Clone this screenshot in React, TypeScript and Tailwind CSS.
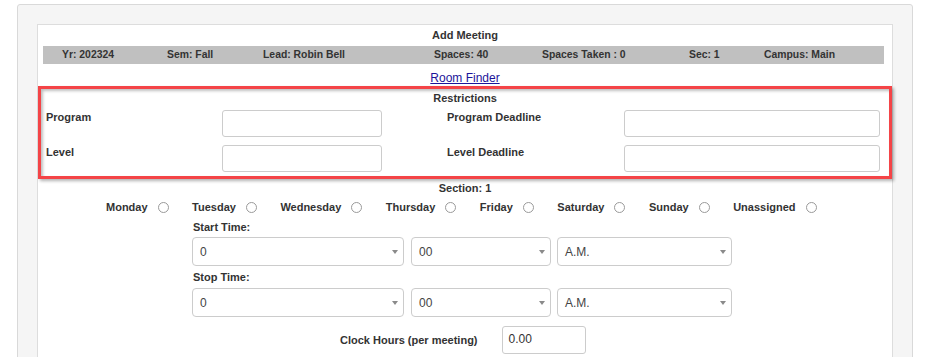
import React from "react";

function Sel({ className, value }: { className: string; value: string }) {
  return (
    <div
      className={
        "relative h-[29px] border border-[#cccccc] rounded-[4px] bg-white flex items-center pl-[7px] text-[12px] text-[#444444] " +
        className
      }
    >
      <span>{value}</span>
      <span className="absolute right-[5px] top-[12px] w-0 h-0 border-l-[3.5px] border-r-[3.5px] border-t-[4px] border-l-transparent border-r-transparent border-t-[#8a8a8a]" />
    </div>
  );
}

function Day({ label }: { label: string }) {
  return (
    <div className="flex items-center">
      <span>{label}</span>
      <span className="ml-[10px] w-[11px] h-[11px] rounded-full border border-[#9a9a9a] bg-white" />
    </div>
  );
}

export default function App() {
  return (
    <div className="w-[928px] h-[357px] overflow-hidden bg-white font-['Liberation_Sans',Arial,sans-serif] text-[#333333]">
      <div className="ml-[17px] mt-[4px] w-[896px] h-[400px] border border-[#d9d9d9] rounded-[3px] bg-[#f5f5f5] pt-[19px] px-[19px]">
        <div className="w-[856px] h-[400px] border border-[#dddddd] bg-white">
          <div className="pt-[3px] h-[17px] text-center text-[11px] leading-[14px] font-bold">Add Meeting</div>
          <div className="ml-[5px] mt-[4px] w-[841px] h-[18px] bg-[#c0c0c0] flex items-center pl-[19px] text-[10.4px] font-bold text-[#333333]">
            <span className="w-[105px] shrink-0">Yr: 202324</span>
            <span className="w-[96px] shrink-0">Sem: Fall</span>
            <span className="w-[171px] shrink-0">Lead: Robin Bell</span>
            <span className="w-[108px] shrink-0">Spaces: 40</span>
            <span className="w-[147px] shrink-0">Spaces Taken : 0</span>
            <span className="w-[75px] shrink-0">Sec: 1</span>
            <span className="shrink-0">Campus: Main</span>
          </div>
          <div className="mt-[7px] h-[15px] text-center text-[12px] leading-[14px]">
            <a href="#" className="underline text-[#1c149a]">Room Finder</a>
          </div>
          <div className="w-[854px] h-[93px] border-[3px] border-[#f44447] shadow-[2px_2px_3px_rgba(0,0,0,0.3),inset_2px_2px_3px_rgba(0,0,0,0.25)] pt-[2px]">
            <div className="text-center text-[11px] leading-[14px] font-bold">Restrictions</div>
            <div className="mt-[5px] pl-[5px] grid grid-cols-[176px_225px_177px_256px] gap-y-[8px] text-[11px] leading-[14px] font-bold">
              <span>Program</span>
              <div className="w-[160px] h-[27px] border border-[#cccccc] rounded-[3px] bg-white" />
              <span>Program Deadline</span>
              <div className="w-[256px] h-[27px] border border-[#cccccc] rounded-[3px] bg-white" />
              <span>Level</span>
              <div className="w-[160px] h-[27px] border border-[#cccccc] rounded-[3px] bg-white" />
              <span>Level Deadline</span>
              <div className="w-[256px] h-[27px] border border-[#cccccc] rounded-[3px] bg-white" />
            </div>
          </div>
          <div className="mt-[2px] text-center text-[11px] leading-[14px] font-bold">Section: 1</div>
          <div className="mt-[5px] ml-[68px] flex items-center gap-[23.5px] text-[11px] leading-[14px] font-bold">
            <Day label="Monday" />
            <Day label="Tuesday" />
            <Day label="Wednesday" />
            <Day label="Thursday" />
            <Day label="Friday" />
            <Day label="Saturday" />
            <Day label="Sunday" />
            <Day label="Unassigned" />
          </div>
          <div className="ml-[154px] w-[540px]">
            <div className="mt-[6px] pl-[1px] text-[11px] leading-[14px] font-bold">Start Time:</div>
            <div className="mt-[3px] flex">
              <Sel className="w-[212px]" value="0" />
              <Sel className="ml-[7px] w-[140px]" value="00" />
              <Sel className="ml-[6px] w-[175px]" value="A.M." />
            </div>
            <div className="mt-[4px] pl-[1px] text-[11px] leading-[14px] font-bold">Stop Time:</div>
            <div className="mt-[4px] flex">
              <Sel className="w-[212px]" value="0" />
              <Sel className="ml-[7px] w-[140px]" value="00" />
              <Sel className="ml-[6px] w-[175px]" value="A.M." />
            </div>
          </div>
          <div className="mt-[9px] ml-[302px] flex items-center text-[11px] leading-[14px] font-bold">
            <span>Clock Hours (per meeting)</span>
            <div className="ml-[24px] w-[84px] h-[28px] border border-[#cccccc] rounded-[3px] bg-white flex items-center pl-[6px] pb-[3px] text-[12px] font-normal text-[#333333]">
              0.00
            </div>
          </div>
        </div>
      </div>
    </div>
  );
}
